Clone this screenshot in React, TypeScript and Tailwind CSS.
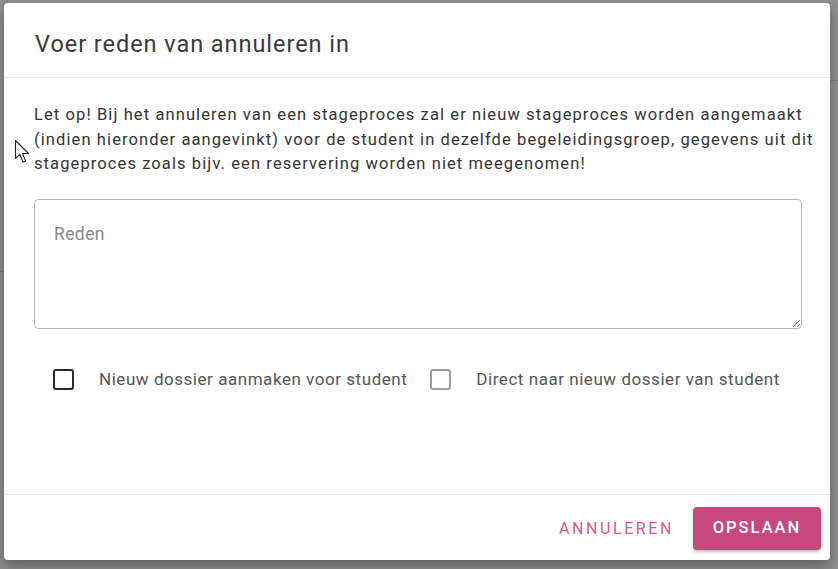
import { useState } from "react";

const font = { fontFamily: "Roboto, 'Noto Sans', sans-serif" };

type CheckProps = {
  label: string;
  dark?: boolean;
};

const CheckOption = ({ label, dark }: CheckProps) => {
  const [checked, setChecked] = useState(false);
  return (
    <label className="flex items-center cursor-pointer" onClick={() => setChecked(!checked)}>
      <span
        className={`w-[21px] h-[21px] rounded-[3px] border-2 ${
          dark ? "border-[#2a2a2a]" : "border-[#9e9e9e]"
        } ${checked ? "bg-[#c7487d] border-[#c7487d]" : "bg-white"}`}
      />
      <span className="ml-[25px] text-[17px] tracking-[0.54px] text-[#555]">{label}</span>
    </label>
  );
};

export default function App() {
  return (
    <div className="relative w-[838px] h-[569px] overflow-hidden bg-[#8f8f8f]" style={font}>
      {/* page behind the overlay */}
      <div className="absolute left-0 top-[271px] w-[4px] h-[1px] bg-[#7a7a7a]" />
      <div className="absolute right-0 top-[80px] w-[8px] h-[1px] bg-[#7a7a7a]" />

      <div className="absolute inset-0 pt-[3px] pl-[4px]">
        <div className="w-[826px] h-[557px] bg-white rounded-[4px] shadow-[0_6px_14px_rgba(0,0,0,0.35)] flex flex-col">
          {/* Header */}
          <div className="h-[75px] flex items-center pl-[31px] border-b border-[#e6e6e6]">
            <h2 className="text-[23.5px] tracking-[0.95px] text-[#3a3a3a] pt-[10px]">Voer reden van annuleren in</h2>
          </div>

          {/* Body */}
          <div className="flex-1 px-[30px] pt-[25px]">
            <p className="text-[16.5px] leading-[24.5px] tracking-[1.1px] text-[#333] w-[790px]">
              Let op! Bij het annuleren van een stageproces zal er nieuw stageproces worden aangemaakt
              (indien hieronder aangevinkt) voor de student in dezelfde begeleidingsgroep, gegevens uit dit
              stageproces zoals bijv. een reservering worden niet meegenomen!
            </p>

            <textarea
              placeholder="Reden"
              className="mt-[22px] block w-[768px] h-[130px] rounded-[4px] border border-[#b9b9b9] px-[19px] pt-[21px] text-[17.5px] tracking-[0.4px] text-[#333] placeholder:text-[#8a8a8a] outline-none"
            />

            <div className="flex items-center mt-[38px] pl-[19px] gap-[23px]">
              <CheckOption label="Nieuw dossier aanmaken voor student" dark />
              <CheckOption label="Direct naar nieuw dossier van student" />
            </div>
          </div>

          {/* Footer */}
          <div className="h-[66px] border-t border-[#e6e6e6] flex items-start justify-end pt-[12px] pr-[9px] gap-[17px]">
            <button className="h-[43px] text-[16px] tracking-[2.6px] text-[#d05a90] px-[2px]">
              ANNULEREN
            </button>
            <button className="h-[43px] w-[128px] rounded-[4px] bg-[#c7487d] text-white text-[16.5px] font-medium tracking-[2px] shadow-[0_2px_3px_rgba(0,0,0,0.25)]">
              OPSLAAN
            </button>
          </div>
        </div>
      </div>

      {/* mouse pointer */}
      <svg className="absolute left-[14px] top-[139px]" width="18" height="26" viewBox="0 0 18 26">
        <path
          d="M1.5 1.5 L1.5 19.5 L5.8 15.4 L9 23 L11.6 21.9 L8.5 14.5 L14.5 14.5 Z"
          fill="white"
          stroke="#222"
          strokeWidth="1.1"
          strokeLinejoin="round"
        />
      </svg>
    </div>
  );
}
